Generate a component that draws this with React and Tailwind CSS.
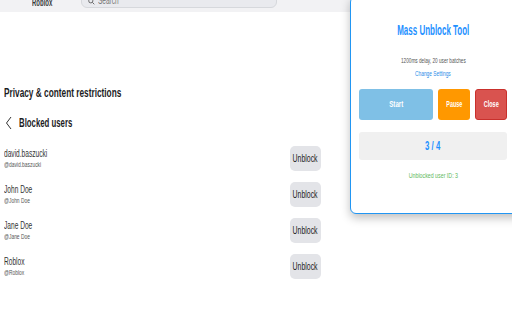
import React from "react";

const users = [
  { name: "david.baszucki", handle: "@david.baszucki" },
  { name: "John Doe", handle: "@John Doe" },
  { name: "Jane Doe", handle: "@Jane Doe" },
  { name: "Roblox", handle: "@Roblox" },
];

// the capture is squeezed horizontally, so glyphs get a narrow x-scale
function Sq({ children, className = "" }) {
  return <span className={`inline-block whitespace-nowrap ${className}`}>{children}</span>;
}

export default function App() {
  return (
    <div className="relative w-[512px] h-[320px] overflow-hidden bg-white font-['Liberation_Sans',Arial,sans-serif]">
      {/* top bar */}
      <div className="h-[12px] bg-[#f2f2f4] flex items-end">
        <Sq className="ml-[32px] mb-[4px] text-[10px] leading-none text-[#393b3d] font-bold scale-x-[0.6] origin-left">Roblox</Sq>
        <div className="ml-[15px] w-[196px] h-[20px] -mt-[12px] self-start border border-[#d6d8dc] rounded-b-[6px] bg-[#e9eaee] flex items-end px-[6px] pb-[1px] gap-[3px]">
          <svg width="7" height="7" viewBox="0 0 10 10" className="mb-[1px]">
            <circle cx="4" cy="4" r="3" fill="none" stroke="#555" strokeWidth="1.2" />
            <line x1="6.3" y1="6.3" x2="9" y2="9" stroke="#555" strokeWidth="1.2" />
          </svg>
          <Sq className="text-[10px] leading-none text-[#777] scale-x-[0.65] origin-left">Search</Sq>
        </div>
      </div>

      {/* main content */}
      <div className="pl-[4px] pt-[74px] w-[321px]">
        <h1 className="text-[12px] leading-[14px] font-bold text-[#1c1c1e]">
          <Sq className="scale-x-[0.69] origin-left">Privacy &amp; content restrictions</Sq>
        </h1>
        <div className="flex items-center mt-[16px] h-[14px]">
          <svg width="8" height="14" viewBox="0 0 8 14" className="ml-[1px]">
            <path d="M6 1 L1.5 7 L6 13" fill="none" stroke="#333" strokeWidth="1" />
          </svg>
          <Sq className="ml-[6px] text-[13px] font-bold text-[#1c1c1e] scale-x-[0.6] origin-left">Blocked users</Sq>
        </div>
        <div className="mt-[16px] flex flex-col gap-[11px]">
          {users.map((u) => (
            <div key={u.name} className="flex items-center justify-between h-[25px]">
              <div className="flex flex-col">
                <Sq className="text-[10px] leading-[12px] text-[#333] scale-x-[0.66] origin-left">{u.name}</Sq>
                <Sq className="text-[7px] leading-[10px] text-[#555] scale-x-[0.7] origin-left">{u.handle}</Sq>
              </div>
              <button className="w-[31px] h-[25px] shrink-0 rounded-[5px] bg-[#e3e4e8] text-[10px] text-[#222] flex items-center justify-center overflow-visible">
                <Sq className="scale-x-[0.69]">Unblock</Sq>
              </button>
            </div>
          ))}
        </div>
      </div>

      {/* extension popup */}
      <div className="absolute left-[350px] top-[-4px] w-[180px] h-[218px] bg-white border-[1.5px] border-[#2196f3] rounded-[6px] shadow-[0_4px_10px_rgba(0,0,0,0.25)] pl-[8px] pt-[25px] flex flex-col">
        <div className="w-[148px] flex flex-col items-center">
          <h2 className="text-[14px] leading-[16px] font-bold text-[#1e90ff]">
            <Sq className="scale-x-[0.57]">Mass Unblock Tool</Sq>
          </h2>
          <p className="mt-[18px] text-[7px] leading-[9px] text-[#555]">
            <Sq className="scale-x-[0.67]">1200ms delay, 20 user batches</Sq>
          </p>
          <p className="mt-[4px] text-[7px] leading-[9px] text-[#2a8ce8]">
            <Sq className="scale-x-[0.69]">Change Settings</Sq>
          </p>
        </div>
        <div className="mt-[11px] flex gap-[5px] w-[148px]">
          <button className="w-[74px] h-[31px] rounded-[3px] bg-[#7fc0e6] text-white text-[9px] font-bold">
            <Sq className="scale-x-[0.68]">Start</Sq>
          </button>
          <button className="w-[32px] h-[31px] rounded-[3px] bg-[#ff9800] text-white text-[9px] font-bold">
            <Sq className="scale-x-[0.6]">Pause</Sq>
          </button>
          <button className="w-[32px] h-[31px] rounded-[3px] bg-[#d9534f] border border-[#c9302c] text-white text-[9px] font-bold">
            <Sq className="scale-x-[0.61]">Close</Sq>
          </button>
        </div>
        <div className="mt-[12px] w-[148px] h-[28px] rounded-[3px] bg-[#f0f0f0] flex items-center justify-center text-[12px] font-bold text-[#1e90ff]">
          <Sq className="scale-x-[0.65]">3 / 4</Sq>
        </div>
        <div className="w-[148px] mt-[11px] text-center text-[8px] leading-[10px] text-[#5cb85c]">
          <Sq className="scale-x-[0.66]">Unblocked user ID: 3</Sq>
        </div>
      </div>
    </div>
  );
}
